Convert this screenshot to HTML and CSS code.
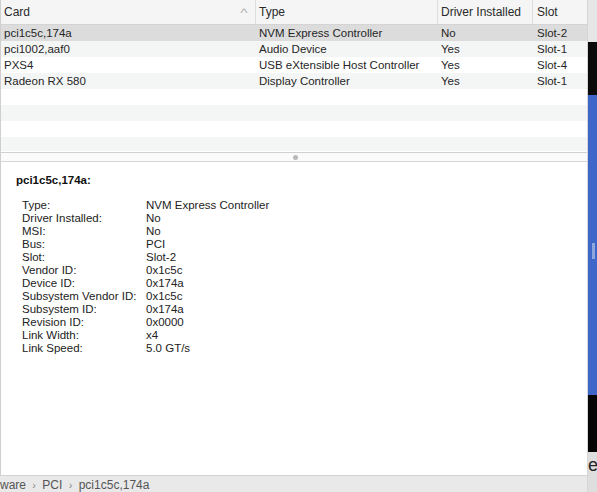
FILE: index.html
```html
<!DOCTYPE html>
<html>
<head>
<meta charset="utf-8">
<link rel="stylesheet" href="styles.css">
</head>
<body>
<div class="screen">
  <div class="window">
    <div class="table">
      <div class="thead">
        <div class="th c1">Card<span class="sort">&#94;</span></div>
        <div class="th c2">Type</div>
        <div class="th c3">Driver Installed</div>
        <div class="th c4">Slot</div>
      </div>
      <div class="row sel"><div class="td c1">pci1c5c,174a</div><div class="td c2">NVM Express Controller</div><div class="td c3">No</div><div class="td c4">Slot-2</div></div>
      <div class="row alt"><div class="td c1">pci1002,aaf0</div><div class="td c2">Audio Device</div><div class="td c3">Yes</div><div class="td c4">Slot-1</div></div>
      <div class="row"><div class="td c1">PXS4</div><div class="td c2">USB eXtensible Host Controller</div><div class="td c3">Yes</div><div class="td c4">Slot-4</div></div>
      <div class="row alt"><div class="td c1">Radeon RX 580</div><div class="td c2">Display Controller</div><div class="td c3">Yes</div><div class="td c4">Slot-1</div></div>
      <div class="row"></div>
      <div class="row alt"></div>
      <div class="row"></div>
      <div class="row alt short"></div>
    </div>
    <div class="splitter"><span class="grip"></span></div>
    <div class="details">
      <div class="dtitle">pci1c5c,174a:</div>
      <div class="dgrid">
        <span>Type:</span><span>NVM Express Controller</span>
        <span>Driver Installed:</span><span>No</span>
        <span>MSI:</span><span>No</span>
        <span>Bus:</span><span>PCI</span>
        <span>Slot:</span><span>Slot-2</span>
        <span>Vendor ID:</span><span>0x1c5c</span>
        <span>Device ID:</span><span>0x174a</span>
        <span>Subsystem Vendor ID:</span><span>0x1c5c</span>
        <span>Subsystem ID:</span><span>0x174a</span>
        <span>Revision ID:</span><span>0x0000</span>
        <span>Link Width:</span><span>x4</span>
        <span>Link Speed:</span><span>5.0 GT/s</span>
      </div>
    </div>
    <div class="status">ware <span class="chev">›</span> PCI <span class="chev">›</span> pci1c5c,174a</div>
  </div>
  <div class="desk">
    <div class="d-gray"></div>
    <div class="d-black"></div>
    <div class="d-blue"><span class="mark"></span></div>
    <div class="d-black2"></div>
    <div class="d-bottom">e</div>
  </div>
</div>
</body>
</html>
```

FILE: styles.css
```css
html, body {
  margin: 0;
  padding: 0;
  background: #ffffff;
}
.screen {
  width: 597px;
  height: 492px;
  display: flex;
  overflow: hidden;
  font-family: "Liberation Sans", Arial, sans-serif;
  font-size: 11.5px;
  color: #262626;
}
.window {
  width: 588px;
  flex: none;
  display: flex;
  flex-direction: column;
  background: #ffffff;
  border-right: 1px solid #d6d6d6;
  box-sizing: border-box;
}
.table {
  height: 152px;
  flex: none;
  border-left: 1px solid #cfcfcf;
}
.thead {
  height: 24px;
  display: flex;
  background: #f5f5f5;
  border-bottom: 1px solid #d4d4d4;
  font-size: 12px;
  color: #2a2a2a;
}
.th {
  display: flex;
  align-items: center;
  box-sizing: border-box;
  border-right: 1px solid #dedede;
}
.th.c4 { border-right: none; }
.c1 { width: 255px; padding-left: 3px; position: relative; }
.c2 { width: 182px; padding-left: 3px; }
.c3 { width: 95px; padding-left: 3px; }
.c4 { flex: 1; padding-left: 4px; }
.sort {
  position: absolute;
  left: 240px;
  top: 6px;
  color: #b3b3b3;
  font-size: 12px;
  transform: scaleX(1.3);
}
.row {
  height: 16px;
  display: flex;
  align-items: center;
  background: #ffffff;
}
.row.alt { background: #f4f5f5; }
.row.sel { background: #dcdcdc; }
.row.short { height: 14px; }
.td {
  box-sizing: border-box;
  white-space: nowrap;
  line-height: 16px;
}
.splitter {
  height: 8px;
  flex: none;
  border-top: 1px solid #d0d0d0;
  border-bottom: 1px solid #d6d6d6;
  border-left: 1px solid #cfcfcf;
  background: #fbfbfb;
  display: flex;
  justify-content: center;
  align-items: center;
}
.grip {
  width: 5px;
  height: 5px;
  border-radius: 50%;
  background: #b9b9b9;
  margin-left: 2px;
}
.details {
  flex: 1;
  border-left: 1px solid #cfcfcf;
  padding: 11px 0 0 15px;
}
.dtitle {
  font-weight: bold;
  font-size: 11.5px;
  line-height: 14px;
  color: #111;
}
.dgrid {
  margin-top: 12px;
  margin-left: 6px;
  display: grid;
  grid-template-columns: 124px auto;
  line-height: 13px;
  color: #222;
}
.status {
  height: 17px;
  flex: none;
  box-sizing: border-box;
  border-top: 1px solid #d3d3d3;
  background: #e9e9e9;
  font-size: 12px;
  line-height: 18px;
  color: #555;
  white-space: nowrap;
}
.chev {
  color: #8a8a8a;
  font-size: 11px;
  margin: 0 3px;
}
.desk {
  flex: 1;
  display: flex;
  flex-direction: column;
}
.d-gray { height: 42px; background: #e6e6e6; }
.d-black { height: 53px; background: #0a0a0a; }
.d-blue { height: 300px; background: #3f67c9; position: relative; }
.mark {
  position: absolute;
  left: 4px;
  top: 148px;
  width: 3px;
  height: 16px;
  background: #8ea6de;
}
.d-black2 { height: 57px; background: #050505; }
.d-bottom {
  flex: 1;
  background: #dedede;
  font-size: 18px;
  line-height: 18px;
  padding-top: 4px;
  color: #222;
  overflow: hidden;
  white-space: nowrap;
}
```
